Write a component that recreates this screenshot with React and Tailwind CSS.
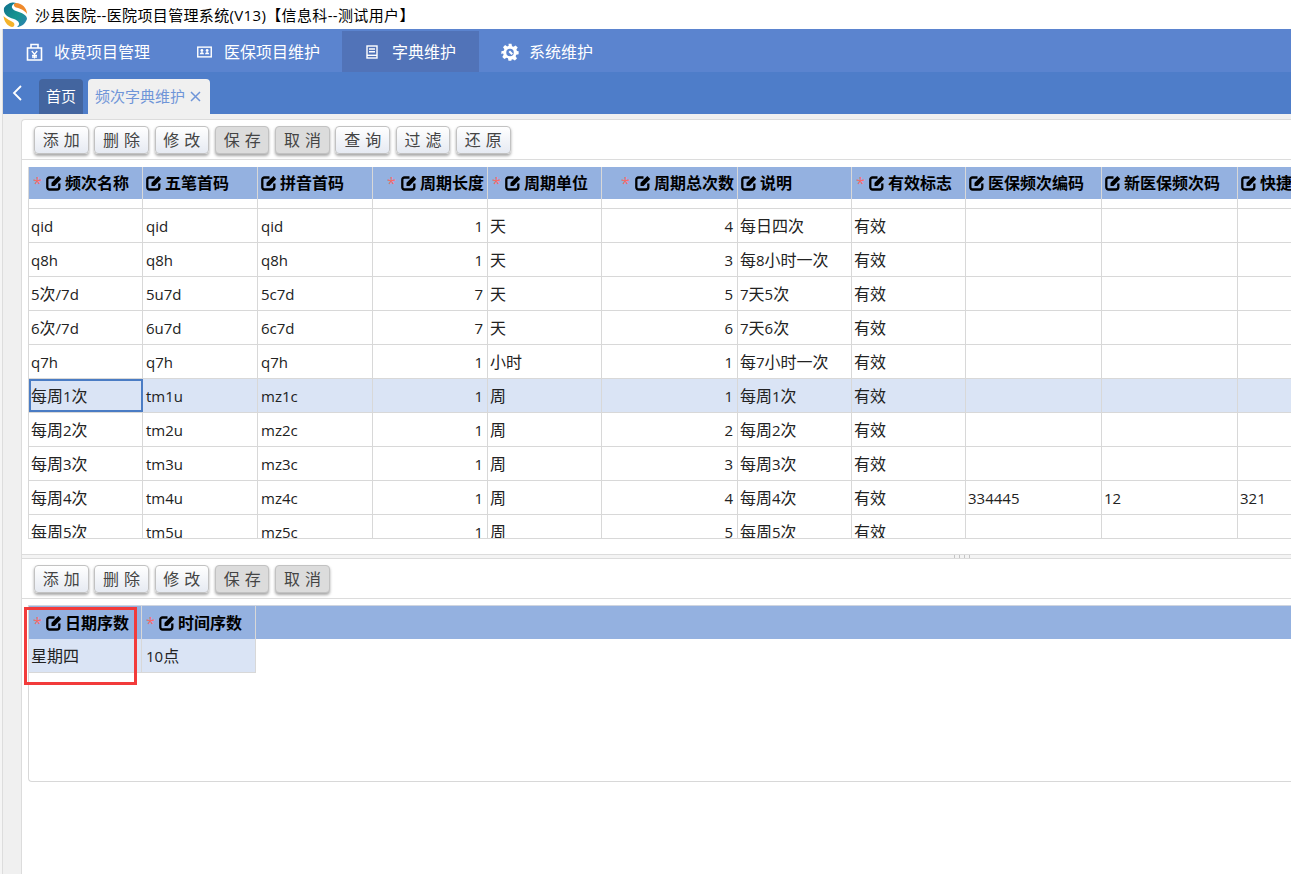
import React from "react";

const FONT = { fontFamily: '"Open Sans","Noto Sans CJK SC",sans-serif' };

function Txt({ v }) {
  const parts = v.split(/([\u4e00-\u9fff]+)/).filter(Boolean);
  return (
    <span>
      {parts.map((p, i) =>
        /[\u4e00-\u9fff]/.test(p) ? (
          <span key={i} className="text-[16px]">{p}</span>
        ) : (
          <span key={i} className="text-[15px]">{p}</span>
        )
      )}
    </span>
  );
}

function EditIcon() {
  return (
    <svg width="16" height="16" viewBox="0 0 16 16" className="shrink-0" fill="none">
      <path d="M8.500 2.500H3.500a2.200 2.200 0 0 0-2.200 2.200v7.600a2.200 2.200 0 0 0 2.200 2.200h7.600a2.200 2.200 0 0 0 2.200-2.200V8.500" stroke="#000" strokeWidth="2.300" />
      <path d="M5.500 11V7.800L12.300 1l3 3-6.800 7z" fill="#000" />
    </svg>
  );
}

function Logo() {
  return (
    <svg width="26" height="26" viewBox="0 0 26 26" className="shrink-0">
      <defs>
        <linearGradient id="logoTeal" x1="0" y1="0" x2="1" y2="1">
          <stop offset="0" stopColor="#0f6f8f" />
          <stop offset="0.55" stopColor="#17958f" />
          <stop offset="1" stopColor="#2f7fb5" />
        </linearGradient>
      </defs>
      <path d="M14 1C20 1 25 6 25 12 22 7 15 6 13 5 11 3 12 1 14 1z" fill="#ef8a2b" />
      <path d="M1.500 14C4 17 10 19 12 21 13 23 12 25 10 25 5 24 2 19 1.500 14z" fill="#f4b32a" />
      <path d="M2 6C6 0 12 0 14 1 8 3 9 7 14 9 20 11 25 13 25 17 23 23 18 25 15 25 19 22 17 19 12 17 5 15 1 12 2 6z" fill="url(#logoTeal)" />
    </svg>
  );
}

function NavIcon({ kind }) {
  if (kind === "fee")
    return (
      <svg width="17" height="18" viewBox="0 0 17 18" fill="none" stroke="#fff" strokeWidth="1.600">
        <path d="M1.500 5h14v12h-14z" />
        <path d="M5 5V1.500h7V5" />
        <path d="M5.800 8l2.700 3.200L11.200 8M8.500 11v4.500M6 12.300h5M6 14h5" strokeWidth="1.300" />
      </svg>
    );
  if (kind === "card")
    return (
      <svg width="15" height="12" viewBox="0 0 16 12" fill="none">
        <rect x="0.800" y="0.800" width="14.400" height="10.400" stroke="#fff" strokeWidth="1.500" />
        <circle cx="5.200" cy="4.400" r="1.500" fill="#fff" />
        <circle cx="10.800" cy="4.400" r="1.500" fill="#fff" />
        <path d="M3 8.500c0-1.500 1-2.200 2.200-2.200s2.200.7 2.200 2.200zM8.600 8.500c0-1.500 1-2.200 2.200-2.200s2.200.7 2.200 2.200z" fill="#fff" />
      </svg>
    );
  if (kind === "doc")
    return (
      <svg width="12" height="14" viewBox="0 0 12 14" fill="none" stroke="#fff" strokeWidth="1.400">
        <rect x="1" y="1" width="10" height="12" />
        <path d="M3 4h6M3 6.700h6" strokeWidth="1.600" />
        <path d="M1 10.300h10" />
      </svg>
    );
  return (
    <svg width="18" height="18" viewBox="0 0 24 24" fill="#fff">
      <path fillRule="evenodd" d="M10 1h4l.7 3.200 2 .8 2.800-1.800 2.800 2.800-1.800 2.800.8 2L23.500 11v4l-3.200.7-.8 2 1.800 2.800-2.800 2.800-2.800-1.800-2 .8L14 23.500h-4l-.7-3.200-2-.8-2.800 1.800-2.800-2.800 1.800-2.800-.8-2L.5 15v-4l3.200-.7.8-2L2.700 5.500l2.800-2.800 2.800 1.800 2-.8zM12 7.500a5 5 0 1 0 0 10 5 5 0 0 0 0-10z" />
      <path d="M12 10l4 4-2 2-4-4z" />
    </svg>
  );
}

const columns = [
  { w: 114, name: "频次名称", star: true },
  { w: 115, name: "五笔首码" },
  { w: 115, name: "拼音首码" },
  { w: 115, name: "周期长度", star: true, right: true },
  { w: 114, name: "周期单位", star: true },
  { w: 136, name: "周期总次数", star: true, right: true },
  { w: 114, name: "说明" },
  { w: 114, name: "有效标志", star: true },
  { w: 136, name: "医保频次编码" },
  { w: 136, name: "新医保频次码" },
  { w: 136, name: "快捷码" },
];

const rows = [
  ["qid", "qid", "qid", "1", "天", "4", "每日四次", "有效", "", "", ""],
  ["q8h", "q8h", "q8h", "1", "天", "3", "每8小时一次", "有效", "", "", ""],
  ["5次/7d", "5u7d", "5c7d", "7", "天", "5", "7天5次", "有效", "", "", ""],
  ["6次/7d", "6u7d", "6c7d", "7", "天", "6", "7天6次", "有效", "", "", ""],
  ["q7h", "q7h", "q7h", "1", "小时", "1", "每7小时一次", "有效", "", "", ""],
  ["每周1次", "tm1u", "mz1c", "1", "周", "1", "每周1次", "有效", "", "", ""],
  ["每周2次", "tm2u", "mz2c", "1", "周", "2", "每周2次", "有效", "", "", ""],
  ["每周3次", "tm3u", "mz3c", "1", "周", "3", "每周3次", "有效", "", "", ""],
  ["每周4次", "tm4u", "mz4c", "1", "周", "4", "每周4次", "有效", "334445", "12", "321"],
  ["每周5次", "tm5u", "mz5c", "1", "周", "5", "每周5次", "有效", "", "", ""],
];

function HeaderCell({ c }) {
  return (
    <div
      style={{ width: c.w }}
      className={`shrink-0 h-full border-r border-[#d8d8d8] flex items-center text-[16px] font-bold text-black whitespace-nowrap overflow-hidden ${
        c.right ? "justify-end pr-[3px]" : "pl-[3px]"
      }`}
    >
      {c.star && (
        <span className={`text-[#f36b6b] font-normal text-[16px] w-[9px] ${c.right ? "mr-[5px]" : "ml-[1px] mr-[4px]"}`}>*</span>
      )}
      <EditIcon />
      <span className="ml-[3px]">{c.name}</span>
    </div>
  );
}

function Button({ label, pressed }) {
  return (
    <button
      className={`w-[54.5px] h-[28px] rounded-[4px] border border-[#c2c2c2] pl-[5px] text-[16px] tracking-[5px] text-[#444] leading-none whitespace-nowrap shadow-[0_2px_3px_rgba(0,0,0,0.35)] ${
        pressed ? "bg-[#dcdcdc]" : "bg-gradient-to-b from-white to-[#e6eaf2]"
      }`}
    >
      {label}
    </button>
  );
}

function Toolbar({ items }) {
  return (
    <div className="h-[40px] border-b border-[#dcdcdc] flex items-center gap-[5.8px] pl-[12px] shrink-0 pt-[1px]">
      {items.map((it) => (
        <Button key={it} label={it} pressed={it === "保存" || it === "取消"} />
      ))}
    </div>
  );
}

export default function App() {
  return (
    <div style={FONT} className="w-[1291px] h-[874px] overflow-hidden bg-white flex flex-col relative">
      <div className="h-[29px] shrink-0 flex items-center pl-[2px] gap-[7px] text-[15px] tracking-[0.35px] text-black">
        <Logo />
        <span className="whitespace-nowrap pt-[1px]">沙县医院--医院项目管理系统(V13)【信息科--测试用户】</span>
      </div>

      <div className="flex-1 flex min-h-0">
        <div className="w-[3px] bg-[#f5f5f5] border-r border-[#dddddd] shrink-0" />
        <div className="flex-1 flex flex-col min-w-0">
          <div className="h-[43px] shrink-0 bg-[#5b84cf] flex text-white text-[16px] pt-[2px]">
            <div className="w-[170px] flex items-center pl-[23px] gap-[11px]">
              <NavIcon kind="fee" />
              <span>收费项目管理</span>
            </div>
            <div className="w-[169px] flex items-center pl-[24px] gap-[12px]">
              <NavIcon kind="card" />
              <span>医保项目维护</span>
            </div>
            <div className="w-[137px] bg-[#5173b8] flex items-center pl-[24px] gap-[14px]">
              <NavIcon kind="doc" />
              <span>字典维护</span>
            </div>
            <div className="flex items-center pl-[22px] gap-[10px]">
              <NavIcon kind="gear" />
              <span>系统维护</span>
            </div>
          </div>

          <div className="h-[42px] shrink-0 bg-[#4e7dc9] flex items-end pl-[36px] gap-[5px] text-[15px] relative">
            <svg width="12" height="18" viewBox="0 0 12 18" fill="none" stroke="#fff" strokeWidth="1.800" className="absolute left-[8px] top-[12px]">
              <path d="M10 2 3 9l7 7" />
            </svg>
            <div className="w-[44px] h-[35px] bg-[#43659f] rounded-t-[4px] text-white flex items-center justify-center">首页</div>
            <div className="w-[122px] h-[35px] bg-[#f0f0f0] rounded-t-[4px] text-[#6f95d8] flex items-center pl-[7px] gap-[5px]">
              频次字典维护
              <svg width="11" height="11" viewBox="0 0 11 11" stroke="#6f95d8" strokeWidth="1.500"><path d="M1 1l9 9M10 1l-9 9" /></svg>
            </div>
          </div>

          <div className="flex-1 min-h-0 bg-[#f0f0f0] pl-[18px] pt-[5px]">
            <div className="h-full bg-white border-l border-t border-[#dcdcdc] rounded-tl-[4px] flex flex-col">
              <Toolbar items={["添加", "删除", "修改", "保存", "取消", "查询", "过滤", "还原"]} />

              <div className="pl-[6px] pt-[7px] h-[395px] shrink-0 border-b border-[#dcdcdc]">
                <div className="h-[372px] border-b border-l border-[#d8d8d8] overflow-hidden">
                  <div className="h-[32px] bg-[#94b1e0] flex w-[1300px]">
                    {columns.map((c) => <HeaderCell key={c.name} c={c} />)}
                  </div>
                  <div className="h-[10px] flex w-[1300px] border-b border-[#d8d8d8]">
                    {columns.map((c) => <div key={c.name} style={{ width: c.w }} className="shrink-0 border-r border-[#d8d8d8]" />)}
                  </div>
                  {rows.map((r, i) => (
                    <div key={i} className={`h-[34px] flex w-[1300px] border-b border-[#d8d8d8] text-[#222] ${i === 5 ? "bg-[#dae4f5]" : ""}`}>
                      {r.map((v, j) => (
                        <div
                          key={j}
                          style={{ width: columns[j].w }}
                          className={`shrink-0 border-r border-[#d8d8d8] flex items-center whitespace-nowrap ${columns[j].right ? "justify-end pr-[4px]" : j === 1 || j === 2 ? "pl-[3px]" : "pl-[2px]"} ${i === 5 && j === 0 ? "outline-2 -outline-offset-2 outline-[#4a7cc4]" : ""}`}
                        >
                          <Txt v={v} />
                        </div>
                      ))}
                    </div>
                  ))}
                </div>
              </div>

              <div className="h-[4px] shrink-0 bg-[#f4f4f4] border-b border-[#dcdcdc] flex gap-[4px] pl-[932px]">
                {[0, 1, 2, 3].map((i) => <div key={i} className="w-[1px] h-full bg-[#c4c4c4]" />)}
              </div>

              <Toolbar items={["添加", "删除", "修改", "保存", "取消"]} />

              <div className="pl-[6px] pt-[6px]">
                <div className="h-[177px] border-l border-b border-[#d8d8d8] rounded-bl-[4px]">
                  <div className="h-[34px] bg-[#94b1e0] flex border-t border-[#cfd5e0]">
                    <HeaderCell c={{ w: 113, name: "日期序数", star: true }} />
                    <HeaderCell c={{ w: 114, name: "时间序数", star: true }} />
                  </div>
                  <div className="h-[34px] flex text-[#222] w-[227px] bg-[#dae4f5] border-b border-[#d8d8d8]">
                    <div className="w-[113px] flex items-center px-[2px] border-r border-[#d8d8d8]"><Txt v="星期四" /></div>
                    <div className="w-[114px] flex items-center px-[4px] border-r border-[#d8d8d8]"><Txt v="10点" /></div>
                  </div>
                </div>
              </div>
            </div>
          </div>
        </div>
      </div>

      <div className="absolute left-[24px] top-[607px] w-[113px] h-[78px] border-[3px] border-[#f23b3b]" />
    </div>
  );
}
